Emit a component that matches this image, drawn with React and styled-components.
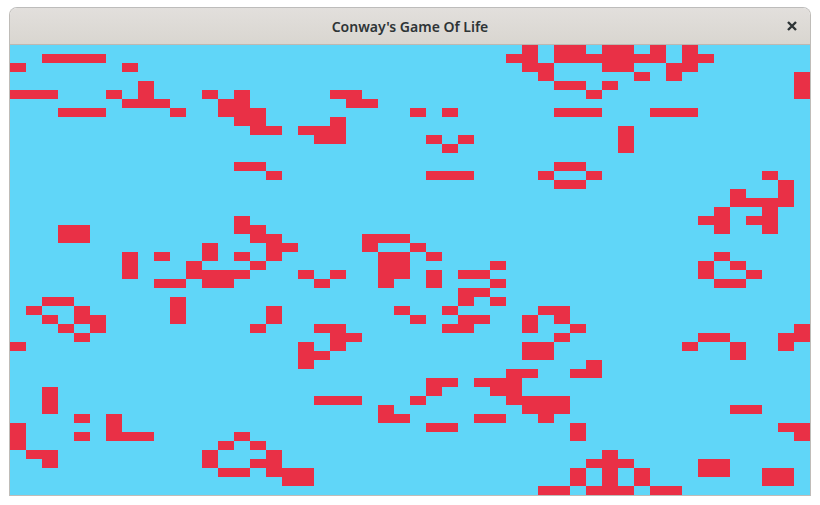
import styled, { createGlobalStyle } from "styled-components";

const GlobalStyle = createGlobalStyle`
body {
  margin: 0;
  background: #ffffff;
}
`;

const Page = styled.div`
  display: flex;
  justify-content: center;
  padding-top: 7px;
`;

const Window = styled.div`
  width: 800px;
  border: 1px solid #bfbcb8;
  border-top-color: #bdbcbb;
  border-radius: 8px 8px 0 0;
  overflow: hidden;
`;

const TitleBar = styled.header`
  display: flex;
  align-items: center;
  justify-content: center;
  position: relative;
  box-sizing: border-box;
  height: 37px;
  border-bottom: 1px solid #bdb8b2;
  background: linear-gradient(to bottom, #e2dfdc, #d9d6d0);
`;

const Title = styled.h1`
  margin: 0;
  font-family: "Noto Sans", "Open Sans", sans-serif;
  font-size: 14px;
  font-weight: 600;
  color: #2e3436;
`;

const CloseButton = styled.button`
  position: absolute;
  top: 10px;
  right: 10px;
  display: flex;
  align-items: center;
  justify-content: center;
  width: 16px;
  height: 16px;
  padding: 0;
  border: none;
  background: transparent;
`;

const Board = styled.main`
  display: flex;
  flex-direction: column;
`;

const Row = styled.div`
  display: flex;
  height: 9px;
`;

const Cell = styled.div`
  width: 16px;
  height: 9px;
  background: ${(p) => (p.$alive ? "#e93046" : "#60d6f8")};
`;

const LIVE = [
  [32, 34, 35, 37, 38, 40, 42],
  [2, 3, 4, 5, 31, 32, 34, 35, 36, 37, 38, 39, 40, 42, 43],
  [0, 7, 32, 33, 37, 38, 41, 42],
  [33, 39, 41, 49],
  [8, 34, 35, 37, 49],
  [0, 1, 2, 6, 8, 12, 14, 20, 21, 36, 49],
  [7, 8, 9, 13, 14, 21, 22],
  [3, 4, 5, 10, 13, 14, 15, 25, 27, 34, 35, 36, 40, 41, 42],
  [14, 15, 20],
  [15, 16, 18, 19, 20, 38],
  [19, 20, 26, 28, 38],
  [27, 38],
  [],
  [14, 15, 34, 35],
  [16, 26, 27, 28, 33, 36, 47],
  [34, 35, 48],
  [45, 48],
  [45, 46, 47, 48],
  [44, 47],
  [14, 43, 44, 46, 47],
  [3, 4, 14, 15, 44, 47],
  [3, 4, 15, 16, 22, 23, 24],
  [12, 16, 17, 22, 25],
  [7, 9, 12, 14, 16, 23, 24, 26, 44],
  [7, 11, 15, 23, 24, 30, 43, 45],
  [7, 11, 12, 13, 14, 18, 20, 23, 24, 26, 28, 29, 43, 46],
  [9, 10, 12, 13, 19, 23, 26, 30, 44, 45],
  [28, 29],
  [2, 3, 10, 28, 30],
  [1, 4, 10, 16, 24, 27, 33, 34],
  [2, 4, 5, 10, 16, 25, 28, 29, 32, 34],
  [3, 5, 15, 19, 20, 27, 28, 32, 35, 49],
  [4, 20, 21, 34, 43, 44, 48, 49],
  [0, 18, 20, 32, 33, 42, 45, 48],
  [18, 19, 32, 33, 45],
  [18, 36],
  [31, 32, 35, 36],
  [26, 27, 29, 30, 31],
  [2, 26, 30, 31],
  [2, 19, 20, 21, 25, 31, 32, 33, 34],
  [2, 23, 32, 33, 34, 45, 46],
  [4, 6, 23, 24, 29, 30, 33],
  [0, 6, 26, 27, 35, 48, 49],
  [0, 4, 6, 7, 8, 14, 35, 49],
  [0, 13, 15],
  [1, 2, 12, 16, 37],
  [2, 12, 15, 16, 36, 37, 38, 43, 44],
  [13, 14, 16, 17, 18, 35, 37, 39, 43, 44, 47, 48],
  [17, 18, 35, 37, 39, 47, 48],
  [33, 34, 36, 37, 38, 40, 41],
];

const COLUMNS = Array.from({ length: 50 }, (_, i) => i);

function App() {
  return (
    <>
      <GlobalStyle />
      <Page>
        <Window>
          <TitleBar>
            <Title>Conway's Game Of Life</Title>
            <CloseButton aria-label="Close">
              <svg width="16" height="16" viewBox="0 0 16 16">
                <path d="M4 4 L12 12 M12 4 L4 12" stroke="#2e3436" strokeWidth="2.4" fill="none" />
              </svg>
            </CloseButton>
          </TitleBar>
          <Board>
            {LIVE.map((live, r) => (
              <Row key={r}>
                {COLUMNS.map((c) => (
                  <Cell key={c} $alive={live.includes(c)} />
                ))}
              </Row>
            ))}
          </Board>
        </Window>
      </Page>
    </>
  );
}

export default App;
